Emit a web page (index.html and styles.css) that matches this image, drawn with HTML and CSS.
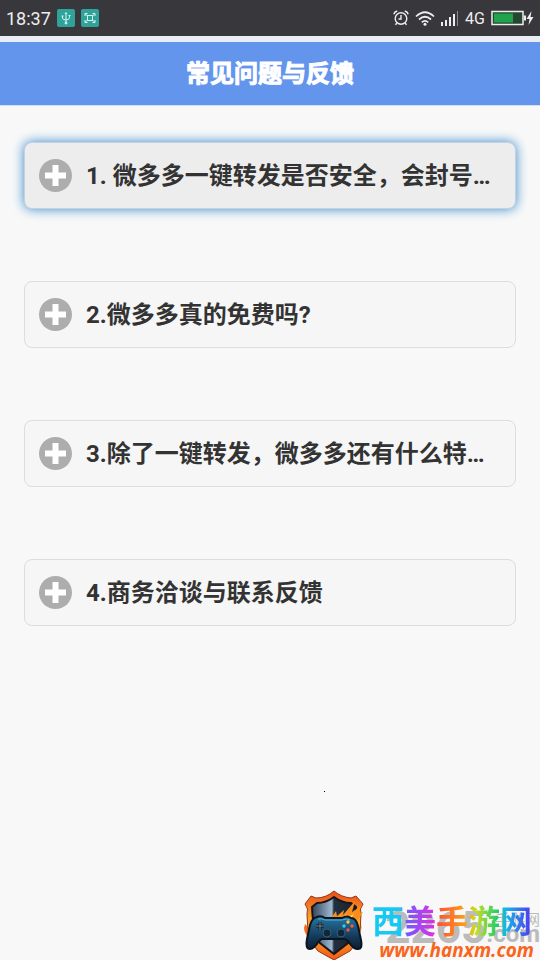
FILE: index.html
```html
<!DOCTYPE html>
<html lang="zh-CN">
<head>
    <meta charset="UTF-8">
    <meta name="viewport" content="width=device-width, initial-scale=1.0">
    <title>常见问题与反馈</title>
    <link rel="stylesheet" href="styles.css">
</head>
<body>
    <div class="status-bar">
        <div class="status-group">
            <span class="clock">18:37</span>
            <svg class="badge" viewBox="0 0 18 18" fill="none" stroke="#d5f5f2" stroke-width="1">
                <rect width="18" height="18" rx="2" fill="#2fa39a" stroke="none"/>
                <path d="M9 4v10M5.500 7v2q0 2 3.500 2M12.500 6.500v2q0 2-3.500 2.500M8 5l1-1.500L10 5"/>
                <circle cx="9" cy="14" r="1" fill="#d5f5f2"/>
                <path d="M4.500 7h2M11.500 6.500h2"/>
            </svg>
            <svg class="badge" viewBox="0 0 18 18" fill="none" stroke="#d5f5f2" stroke-width="1">
                <rect width="18" height="18" rx="2" fill="#2fa39a" stroke="none"/>
                <path d="M4 7V4.500h2.500M11.500 4.500H14V7M14 11v2.500h-2.500M6.500 13.500H4V11M4.500 5l2 2M13.500 5l-2 2M4.500 13l2-2M13.500 13l-2-2"/>
                <rect x="6.500" y="6.500" width="5" height="5"/>
            </svg>
        </div>
        <div class="status-group">
            <svg class="icon-alarm" viewBox="0 0 16 16" fill="none" stroke="#eee" stroke-width="1.400">
                <circle cx="8" cy="8.500" r="5.800"/>
                <path d="M8 5v4H5.500M.8 4.200Q1.500 1.800 4.200 1M11.800 1q2.700.8 3.400 3.200M3.800 13l-1.300 1.800M12.200 13l1.300 1.800"/>
            </svg>
            <svg class="icon-wifi" viewBox="0 0 20 15" fill="none" stroke="#eee" stroke-width="1.700">
                <path d="M1 5.500q9-8.500 18 0M4 8.500q6-5.500 12 0M6.800 11.300q3.200-2.800 6.400 0"/>
                <circle cx="10" cy="13.300" r="1.500" fill="#eee" stroke="none"/>
            </svg>
            <svg class="icon-signal" viewBox="0 0 18 16" fill="#eee">
                <path d="M0 12h2v4H0zM4 10h2v6H4zM8 7h2v9H8zM12 4h2v12h-2z"/>
                <path d="M16 1h1v15h-1z" fill="#8b8b90"/>
            </svg>
            <span class="network">4G</span>
            <svg class="icon-battery" viewBox="0 0 43 16">
                <rect x="1" y="1.500" width="31" height="13" fill="#28462f" stroke="#eee" stroke-width="1.500"/>
                <path d="M3 3.500h19v9H3z" fill="#1fa34d"/>
                <path d="M33 5.500h2v5h-2zM40.500 1L35.500 9h3l-1 6 5-8h-3z" fill="#eee"/>
            </svg>
        </div>
    </div>

    <header class="header">
        <h1>常见问题与反馈</h1>
    </header>

    <main class="faq">
        <button type="button" class="faq-item active">
            <svg class="plus" viewBox="0 0 33 33"><circle cx="16.500" cy="16.500" r="16.500"/><path d="M6 16.500h21M16.500 6v21"/></svg>
            <span class="faq-title">1. 微多多一键转发是否安全，会封号…</span>
        </button>
        <button type="button" class="faq-item">
            <svg class="plus" viewBox="0 0 33 33"><circle cx="16.500" cy="16.500" r="16.500"/><path d="M6 16.500h21M16.500 6v21"/></svg>
            <span class="faq-title">2.微多多真的免费吗?</span>
        </button>
        <button type="button" class="faq-item">
            <svg class="plus" viewBox="0 0 33 33"><circle cx="16.500" cy="16.500" r="16.500"/><path d="M6 16.500h21M16.500 6v21"/></svg>
            <span class="faq-title">3.除了一键转发，微多多还有什么特…</span>
        </button>
        <button type="button" class="faq-item">
            <svg class="plus" viewBox="0 0 33 33"><circle cx="16.500" cy="16.500" r="16.500"/><path d="M6 16.500h21M16.500 6v21"/></svg>
            <span class="faq-title">4.商务洽谈与联系反馈</span>
        </button>
    </main>

    <span class="speck"></span>

    <footer class="site-mark">
        <svg class="shield" viewBox="0 0 66 75">
            <defs>
                <linearGradient id="fire" x1="0" y1="0" x2="0" y2="1">
                    <stop offset="0" stop-color="#e8501a"/>
                    <stop offset=".5" stop-color="#ffb52e"/>
                    <stop offset="1" stop-color="#ef5a16"/>
                </linearGradient>
                <linearGradient id="steel">
                    <stop offset="0" stop-color="#31435a"/>
                    <stop offset=".45" stop-color="#9db9d0"/>
                    <stop offset=".5" stop-color="#22303f"/>
                    <stop offset="1" stop-color="#17202c"/>
                </linearGradient>
                <linearGradient id="pad" x1="0" y1="0" x2="0" y2="1">
                    <stop offset="0" stop-color="#2877a3"/>
                    <stop offset=".6" stop-color="#143c5c"/>
                    <stop offset="1" stop-color="#0d1c30"/>
                </linearGradient>
            </defs>
            <path d="M5 39q-3 7 4 14l3 10h42l3-11q6-6 4-13l-5 5H10z" fill="#f26a1b"/>
            <path d="M34 6q-8 7-18 7l-5-2-6 8q4 5 2 10 0 27 11 37l16 9 16-9q11-10 11-37-2-5 2-10l-7-8-5 2q-10-1-17-7z" fill="url(#fire)" stroke="#9a3512"/>
            <path d="M34 12q-8 6-17 6l-5 4q1 25 8 36l14 11 14-11q7-13 8-36l-5-4q-9 0-17-6z" fill="url(#steel)" stroke="#1c1515" stroke-width="2"/>
            <path d="M20 39q11-4 16-13l1 5 7-6-1 5 12-14-3 11 9-6-3 8 5-2-8 12z" fill="#fb8d1c"/>
            <path d="M28 37l11-5-1 4 9-7-2 5 9-5-5 8z" fill="#ffe05a"/>
            <path d="M17 32q4-2 8 1h17q5-3 9 0 5 0 7 8l3 14q2 10-4 9-4 0-9-8l-3-2H22l-3 2q-5 8-9 8-5 0-3-10l3-14q2-7 7-8z" fill="url(#pad)" stroke="#0b1522" stroke-width="2"/>
            <path d="M18 34q4-1 7 1h17q5-2 8 0" fill="none" stroke="#51b3d6"/>
            <path d="M20 37v8M16 41h8" stroke="#0a1725" stroke-width="3"/>
            <path d="M20 37v8M16 41h8" stroke="#738999" stroke-width="1"/>
            <circle cx="27" cy="48" r="4" fill="#10273a" stroke="#345f77"/>
            <circle cx="41" cy="48" r="4" fill="#10273a" stroke="#345f77"/>
            <circle cx="48" cy="37" r="1.700" fill="#ffc842"/>
            <circle cx="44" cy="41" r="1.700" fill="#35cde9"/>
            <circle cx="52" cy="41" r="1.700" fill="#ff5640"/>
            <circle cx="48" cy="45" r="1.700" fill="#f05346"/>
        </svg>
        <div class="mark-text">
            <span class="ghost"><b>2265</b><span class="ghost-side"><span>手游网</span><b>.com</b></span></span>
            <strong class="mark-name">西美手游网</strong>
            <a class="mark-url" href="#">www.hanxm.com</a>
        </div>
    </footer>
</body>
</html>
```
FILE: styles.css
```css
* {
    box-sizing: border-box;
}
body {
    margin: 0;
    min-height: 100vh;
    display: flex;
    flex-direction: column;
    background-color: #f8f8f8;
    color: #333;
    font-family: Roboto, "Noto Sans CJK SC", sans-serif;
}
.status-bar {
    display: flex;
    justify-content: space-between;
    height: 36px;
    padding: 0 6px;
    background-color: #38373c;
    color: #eee;
}
.status-group {
    display: flex;
    align-items: center;
    gap: 6px;
}
.clock {
    font-size: 18px;
}
.badge {
    width: 18px;
    height: 18px;
}
.icon-alarm {
    width: 16px;
    height: 16px;
}
.icon-wifi {
    width: 20px;
    height: 15px;
}
.icon-signal {
    width: 18px;
    height: 16px;
}
.network {
    font-size: 16px;
}
.icon-battery {
    width: 43px;
    height: 16px;
}
.header {
    padding: 16px 16px 15px;
    border-top: 6px solid #e9eef6;
    border-bottom: 1px solid #d5e0f2;
    background-color: #6495ed;
    color: #fff;
    text-align: center;
}
.header h1 {
    margin: 0;
    font-size: 24px;
    line-height: 32px;
    -webkit-text-stroke: 1px #fff;
}
.faq {
    display: flex;
    flex-direction: column;
    gap: 72px;
    padding: 36px 24px;
}
.faq-item {
    display: flex;
    align-items: center;
    gap: 14px;
    width: 100%;
    height: 67px;
    padding: 0 14px;
    border: 1px solid #ddd;
    border-radius: 8px;
    background-color: #f6f6f6;
    color: #333;
    font-family: inherit;
    font-size: 24px;
    font-weight: bold;
    text-align: left;
    cursor: pointer;
}
.faq-item.active {
    background-color: #ededed;
    border-color: #c3d2e0;
    box-shadow: 0 0 12px #3388cc;
}
.plus {
    flex: none;
    width: 33px;
    height: 33px;
    fill: #adadad;
    stroke: none;
}
.plus path {
    stroke: #fff;
    stroke-width: 6px;
}
.faq-title {
    min-width: 0;
    line-height: 36px;
    overflow: hidden;
    white-space: nowrap;
    text-overflow: ellipsis;
}
.speck {
    position: absolute;
    left: 60%;
    top: 791px;
    width: 1px;
    height: 1px;
    background-color: #000;
}
.site-mark {
    display: flex;
    justify-content: flex-end;
    margin-top: auto;
}
.shield {
    width: 66px;
    height: 75px;
}
.mark-text {
    position: relative;
    display: flex;
    flex-direction: column;
    justify-content: flex-end;
    width: 174px;
    padding: 0 6px;
}
.mark-name {
    position: relative;
    align-self: flex-start;
    font-size: 32px;
    line-height: 36px;
    font-weight: bold;
    background: linear-gradient(90deg, #16c8f4 0 18%, #7657ff 22%, #d931e4 38%, #ff5b2e 43%, #ff9b18 58%, #c6df20 65%, #28ce68 78%, #16b4f0 84%, #5136ee);
    background-clip: text;
    -webkit-background-clip: text;
    color: transparent;
}
.mark-url {
    position: relative;
    font-family: "Open Sans", sans-serif;
    font-size: 19px;
    line-height: 20px;
    font-weight: bold;
    font-style: italic;
    text-align: right;
    text-decoration: none;
    color: #f9651c;
}
/* grey mark behind the site name */
.ghost {
    position: absolute;
    right: 0;
    bottom: 10px;
    display: flex;
    align-items: flex-end;
    color: #bbb;
    font-size: 44px;
    line-height: 44px;
}
.ghost-side {
    display: flex;
    flex-direction: column;
    align-items: flex-end;
    font-size: 24px;
    line-height: 16px;
    padding-bottom: 8px;
}
.ghost-side span {
    font-size: 15px;
    line-height: 12px;
}
```
